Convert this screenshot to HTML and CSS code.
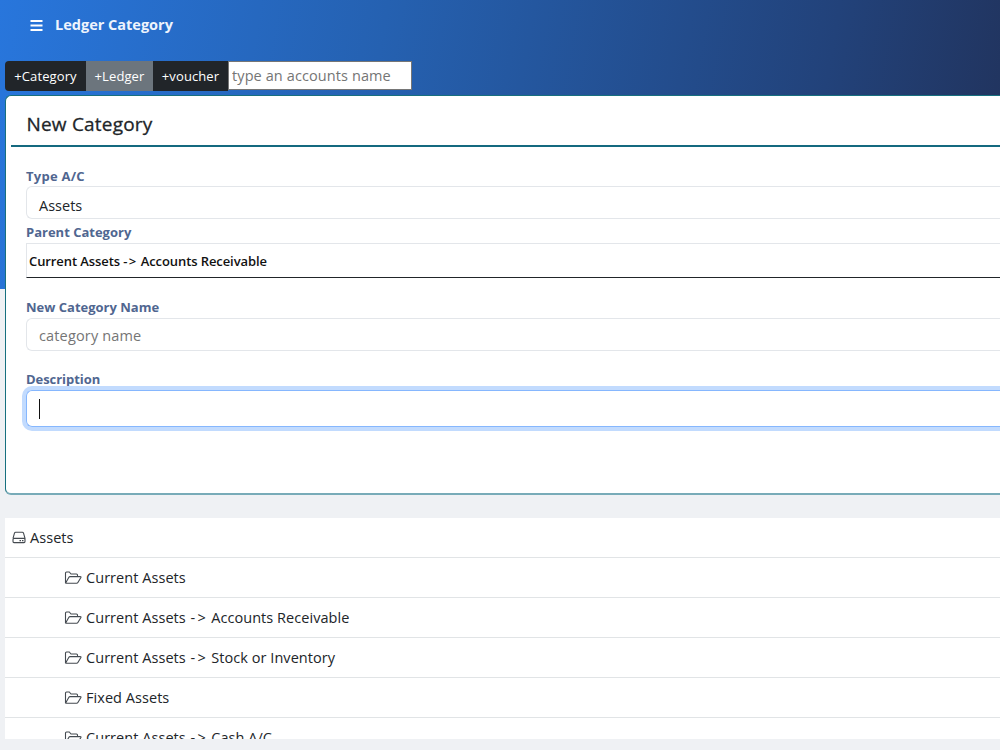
FILE: index.html
```html
<!DOCTYPE html>
<html lang="en">
<head>
    <meta charset="utf-8">
    <title>Ledger Category</title>
    <link rel="stylesheet" href="styles.css">
</head>
<body>
    <!-- Icons used in the tree -->
    <svg class="icon-defs">
        <symbol id="folder" viewBox="0 0 18 14">
            <path d="M1.5 12.2V2Q1.5 1 2.5 1H5.3L7 3H12.5Q13.5 3 13.5 4V5.5M1.5 12.2L4.9 6.3Q5.3 5.6 6.1 5.6H16.2Q17.4 5.6 16.9 6.5L13.9 11.5Q13.5 12.3 12.6 12.3H2.1Q1.5 12.3 1.5 11.7"/>
        </symbol>
        <symbol id="drive" viewBox="0 0 14 13">
            <path d="M1 7.4L2.4 2.3Q2.7 1.3 3.7 1.3H10.3Q11.3 1.3 11.6 2.3L13 7.4V10.6Q13 11.6 12 11.6H2Q1 11.6 1 10.6V8.4Q1 7.4 2 7.4H12Q13 7.4 13 8.4M7.5 9.6H9M10 9.6H11.5"/>
        </symbol>
    </svg>

    <!-- Header -->
    <header class="topbar">
        <svg class="menu-icon" viewBox="0 0 13 11"><path d="M.5 1H12.5M.5 5.5H12.5M.5 10H12.5"/></svg>
        <h1 class="page-title">Ledger Category</h1>
    </header>

    <div class="toolbar">
        <button class="btn btn-category">+Category</button>
        <button class="btn btn-ledger">+Ledger</button>
        <button class="btn btn-voucher">+voucher</button>
        <input class="search" type="text" placeholder="type an accounts name">
    </div>

    <!-- New category form -->
    <section class="card">
        <h2 class="card-title">New Category</h2>
        <form class="card-body">
            <label class="label label-type">Type A/C</label>
            <div class="control">Assets</div>
            <label class="label label-parent">Parent Category</label>
            <div class="parent">Current Assets <span class="arrow-sm">-&gt;</span> Accounts Receivable</div>
            <label class="label label-name">New Category Name</label>
            <input class="control control-name" type="text" placeholder="category name">
            <label class="label label-desc">Description</label>
            <div class="control control-focus"><span class="caret"></span></div>
        </form>
    </section>

    <!-- Category tree -->
    <ul class="tree">
        <li class="row root"><svg class="drive"><use href="#drive"/></svg><span>Assets</span></li>
        <li class="row"><svg class="folder"><use href="#folder"/></svg><span>Current Assets</span></li>
        <li class="row"><svg class="folder"><use href="#folder"/></svg><span>Current Assets <span class="arrow">-&gt;</span> Accounts Receivable</span></li>
        <li class="row"><svg class="folder"><use href="#folder"/></svg><span>Current Assets <span class="arrow">-&gt;</span> Stock or Inventory</span></li>
        <li class="row"><svg class="folder"><use href="#folder"/></svg><span>Fixed Assets</span></li>
        <li class="row"><svg class="folder"><use href="#folder"/></svg><span>Current Assets <span class="arrow">-&gt;</span> Cash A/C</span></li>
    </ul>
</body>
</html>
```

FILE: styles.css
```css
* {
    box-sizing: border-box;
}
body {
    margin: 0;
    height: 750px;
    overflow: hidden;
    font-family: "Open Sans", "Noto Sans", sans-serif;
    font-size: 14.5px;
    color: #212529;
    background: linear-gradient(100deg, #2876dc 0%, #2561b1 37%, #22427a 80%, #21325b 100%) no-repeat 0 0 / 100% 289px #eff1f4;
}
.icon-defs {
    display: none;
}
.topbar {
    display: flex;
    align-items: center;
    height: 61px;
    padding: 0 0 12px 30px;
}
.menu-icon {
    width: 13px;
    height: 11px;
    margin: 1px 12px 0 0;
    stroke: #fff;
    stroke-width: 1.8;
}
.page-title {
    margin: 0;
    font-size: 14.5px;
    font-weight: 700;
    color: #eef4fd;
}
.toolbar {
    display: flex;
    height: 34px;
    padding-left: 5px;
}
.btn {
    height: 30px;
    padding: 0;
    border: none;
    font-family: inherit;
    font-size: 13px;
    letter-spacing: 0.1px;
    color: #fff;
    background: #212529;
}
.btn-category {
    width: 81px;
    border-radius: 4px 0 0 4px;
}
.btn-ledger {
    width: 67px;
    background: #6c757d;
}
.btn-voucher {
    width: 75px;
}
.search {
    width: 184px;
    height: 29px;
    padding: 0 3px;
    border: 1px solid #767676;
    font-family: inherit;
    font-size: 14.5px;
    letter-spacing: 0.1px;
}
.search::placeholder,
.control::placeholder {
    color: #757575;
    opacity: 1;
}
.card {
    height: 400px;
    margin-left: 5px;
    padding-left: 5px;
    background: #fff;
    border: 1px solid #17707f;
    border-bottom: 2px solid #78abb8;
    border-right: none;
    border-radius: 6px 0 0 6px;
}
.card-title {
    height: 51px;
    margin: 0;
    padding-left: 15.5px;
    border-bottom: 2px solid #14697f;
    font-size: 19px;
    font-weight: 500;
    line-height: 56px;
    letter-spacing: 0.2px;
    -webkit-text-stroke: 0.3px #212529;
}
.card-body {
    display: flex;
    flex-direction: column;
    padding: 20px 0 0 15px;
}
.label {
    height: 19px;
    font-size: 13px;
    font-weight: 700;
    line-height: 19px;
    color: #506690;
}
.label-type {
    line-height: 18px;
    letter-spacing: 0.25px;
}
.label-name {
    height: 20px;
}
.label-desc {
    height: 20px;
    letter-spacing: -0.05px;
}
.control {
    height: 33px;
    padding: 0 12px;
    border: 1px solid #e3e6ea;
    border-right: none;
    border-radius: 6px 0 0 6px;
    font-family: inherit;
    font-size: 14.5px;
    line-height: 37px;
}
.parent {
    height: 35px;
    margin-bottom: 20px;
    padding-left: 2px;
    border: 1px solid #e3e6ea;
    border-right: none;
    border-bottom-color: #212529;
    font-size: 13px;
    font-weight: 600;
    line-height: 35px;
    letter-spacing: -0.09px;
    color: #111;
}
.label-parent {
    height: 24px;
    line-height: 27px;
}
.control-name {
    margin-bottom: 19px;
    padding-top: 2px;
    letter-spacing: 0.15px;
}
.control-focus {
    height: 37px;
    padding-top: 8px;
    border-color: #86b7fe;
    box-shadow: 0 0 0 4px #c2dbfe;
}
.caret {
    display: block;
    width: 1px;
    height: 20px;
    background: #111;
}
.tree {
    height: 221px;
    margin: 23px 0 0 5px;
    padding: 0;
    overflow: hidden;
    list-style: none;
    background: #fff;
}
.row {
    display: flex;
    align-items: center;
    height: 40px;
    padding-left: 59px;
    border-bottom: 1px solid #e1e4e6;
    letter-spacing: 0.05px;
}
.root {
    padding-left: 7px;
}
.arrow {
    margin: 0 -0.5px 0 1px;
    letter-spacing: 2.2px;
}
.arrow-sm {
    letter-spacing: 1.3px;
}
.row svg {
    fill: none;
    stroke: #444a50;
    stroke-width: 1.1;
}
.folder {
    width: 18px;
    height: 14px;
    margin-right: 4px;
}
.drive {
    width: 14px;
    height: 13px;
    margin-right: 4px;
}
```
